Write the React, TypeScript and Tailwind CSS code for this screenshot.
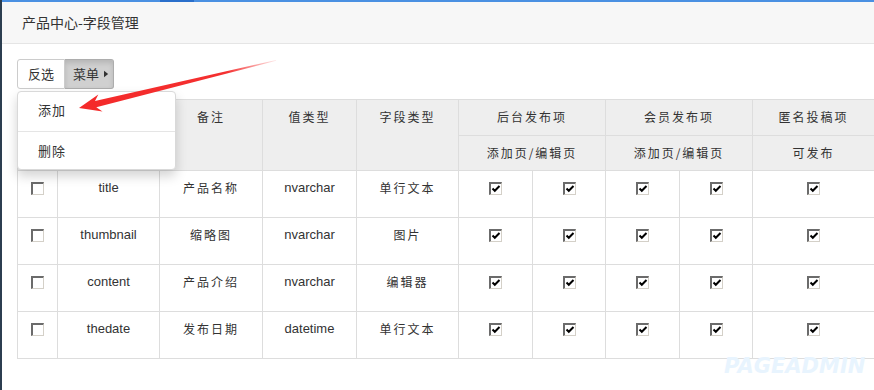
type Row = { name: string; note: string; valueType: string; fieldType: string }

const rows: Row[] = [
  { name: 'title', note: '产品名称', valueType: 'nvarchar', fieldType: '单行文本' },
  { name: 'thumbnail', note: '缩略图', valueType: 'nvarchar', fieldType: '图片' },
  { name: 'content', note: '产品介绍', valueType: 'nvarchar', fieldType: '编辑器' },
  { name: 'thedate', note: '发布日期', valueType: 'datetime', fieldType: '单行文本' },
]

// old windows style checkbox
function Box({ checked }: { checked?: boolean }) {
  return (
    <span className="inline-block w-[13px] h-[13px] border-t-2 border-l-2 border-t-[#6b6b6b] border-l-[#6b6b6b] border-b border-r border-b-[#d4d0c8] border-r-[#d4d0c8] bg-white align-middle">
      {checked && (
        <svg viewBox="0 0 10 10" className="w-[10px] h-[10px] block">
          <path d="M1.5 4.5 L3.8 6.8 L8.5 2" stroke="#000" strokeWidth="2" fill="none" />
        </svg>
      )}
    </span>
  )
}

const th = 'border border-[#dddddd] bg-[#eeeeee] font-normal text-center align-top pt-[8px] leading-[18px] tracking-[2px]'
const td = 'border border-[#dddddd] text-center align-top pt-[8px] leading-[18px]'

export default function App() {
  return (
    <div className="relative h-[390px] w-[874px] overflow-hidden bg-white flex font-['Liberation_Sans','Noto_Sans_CJK_SC',sans-serif] text-[#333]">
      {/* dark sidebar edge */}
      <div className="w-[2px] bg-[#2c3e50] shrink-0" />

      <div className="flex-1 flex flex-col">
        {/* top accent bar */}
        <div className="flex h-[2px]">
          <div className="w-[158px] bg-[#4a90e2]" />
          <div className="w-[34px] bg-[#2a6fcb]" />
          <div className="flex-1 bg-[#4a90e2]" />
        </div>

        {/* page header */}
        <div className="h-[42px] bg-[#f7f7f7] border-b border-[#e5e5e5] flex items-center pl-[20px] text-[14px] font-['Noto_Sans_CJK_SC',sans-serif]">
          产品中心-字段管理
        </div>

        <div className="relative pl-[15px] pt-[15px]">
          {/* button group */}
          <div className="flex h-[30px] text-[13px] font-['Noto_Sans_CJK_SC',sans-serif]">
            <button className="px-[10px] border border-[#cccccc] rounded-l-[3px] bg-white">反选</button>
            <button className="flex items-center pl-[8px] pr-[4px] border border-l-0 border-[#adadad] rounded-r-[3px] bg-[#d0d0d0] shadow-[inset_0_3px_5px_rgba(0,0,0,0.125)]">
              菜单
              <svg viewBox="0 0 6 8" className="w-[5px] h-[8px] ml-[5px]">
                <path d="M0 0 L5 4 L0 8 Z" fill="#333" />
              </svg>
            </button>
          </div>

          {/* table */}
          <table className="mt-[10px] border-collapse table-fixed w-[857px] text-[13px]">
            <colgroup>
              <col className="w-[40px]" />
              <col className="w-[102px]" />
              <col className="w-[103px]" />
              <col className="w-[94px]" />
              <col className="w-[102px]" />
              <col className="w-[74px]" />
              <col className="w-[73px]" />
              <col className="w-[74px]" />
              <col className="w-[73px]" />
              <col className="w-[122px]" />
            </colgroup>
            <thead className="font-['Noto_Sans_CJK_SC',sans-serif] text-[12px]">
              <tr className="h-[36px]">
                <th rowSpan={2} className={th}></th>
                <th rowSpan={2} className={th}>字段名称</th>
                <th rowSpan={2} className={th}>备注</th>
                <th rowSpan={2} className={th}>值类型</th>
                <th rowSpan={2} className={th}>字段类型</th>
                <th colSpan={2} className={th}>后台发布项</th>
                <th colSpan={2} className={th}>会员发布项</th>
                <th className={th}>匿名投稿项</th>
              </tr>
              <tr className="h-[35px]">
                <th colSpan={2} className={th}>添加页/编辑页</th>
                <th colSpan={2} className={th}>添加页/编辑页</th>
                <th className={th}>可发布</th>
              </tr>
            </thead>
            <tbody>
              {rows.map((r) => (
                <tr key={r.name} className="h-[47px]">
                  <td className={td}><Box /></td>
                  <td className={td}>{r.name}</td>
                  <td className={`${td} text-[12px] tracking-[2px] font-['Noto_Sans_CJK_SC',sans-serif]`}>{r.note}</td>
                  <td className={td}>{r.valueType}</td>
                  <td className={`${td} text-[12px] tracking-[2px] font-['Noto_Sans_CJK_SC',sans-serif]`}>{r.fieldType}</td>
                  <td className={td}><Box checked /></td>
                  <td className={td}><Box checked /></td>
                  <td className={td}><Box checked /></td>
                  <td className={td}><Box checked /></td>
                  <td className={td}><Box checked /></td>
                </tr>
              ))}
            </tbody>
          </table>

          {/* open dropdown menu */}
          <div className="absolute left-[15px] top-[47px] w-[159px] h-[79px] bg-white border border-[#d9d9d9] rounded-[4px] shadow-[0_6px_12px_rgba(0,0,0,0.175)] flex flex-col text-[13px] font-['Noto_Sans_CJK_SC',sans-serif] tracking-[1px]">
            <div className="h-[39px] flex items-center pl-[20px] pb-[4px]">添加</div>
            <div className="h-px bg-[#e5e5e5]" />
            <div className="flex-1 flex items-center pl-[20px]">删除</div>
          </div>
        </div>
      </div>

      {/* annotation arrow */}
      <svg className="absolute left-0 top-0 pointer-events-none" width="874" height="390">
        <defs>
          <linearGradient id="arr" x1="79" y1="108" x2="276" y2="60" gradientUnits="userSpaceOnUse">
            <stop offset="0" stopColor="#f42a2a" />
            <stop offset="0.75" stopColor="#f43030" />
            <stop offset="1" stopColor="#f43030" stopOpacity="0.1" />
          </linearGradient>
        </defs>
        <polygon
          points="79,108 98.3,94.5 95,101 276,60 276.2,60.8 96.3,107.2 102.5,111.5"
          fill="url(#arr)"
        />
      </svg>

      {/* watermark */}
      <div className="absolute left-[724px] top-[355px] text-[21px] leading-[22px] font-bold italic text-[#e8f4fe] font-['DejaVu_Sans',sans-serif]">
        PAGEADMIN
      </div>
    </div>
  )
}
